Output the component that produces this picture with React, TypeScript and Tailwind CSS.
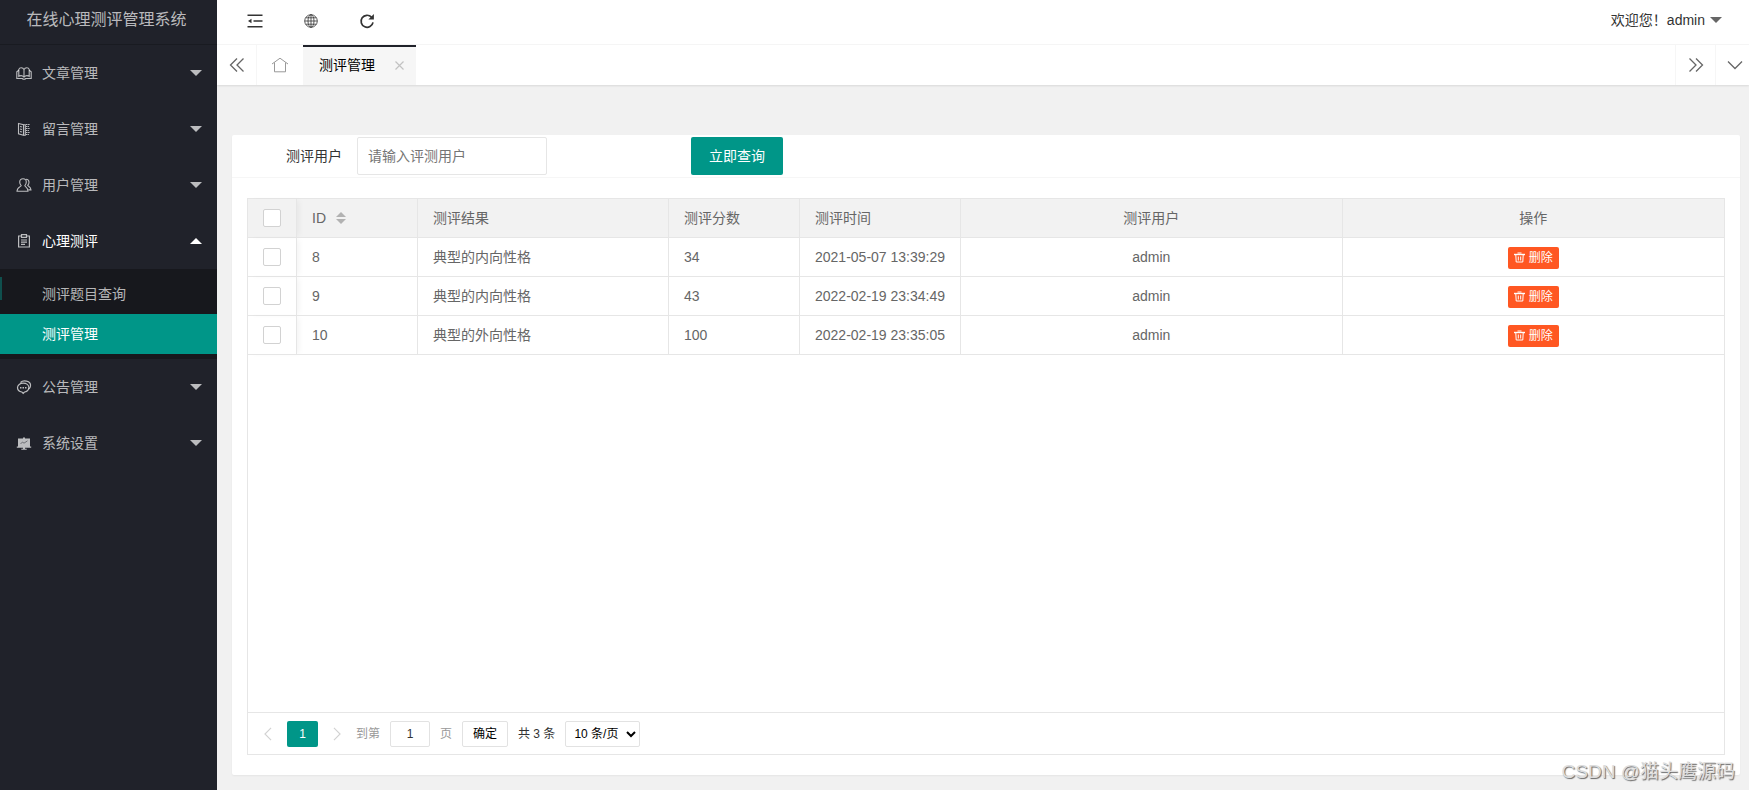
import { useState } from "react";

const FONT = "font-['Liberation_Sans','Noto_Sans_CJK_SC',sans-serif]";

interface IconProps {
    className?: string;
}

const BookIcon = () => (
    <svg width="16" height="16" viewBox="0 0 16 16" fill="none" stroke="currentColor" strokeWidth="1.1">
        <path d="M8 4.600C7 2.200 3.600 2.200 2.800 4.400v7c1.400-1 3.800-.8 5.200.6 1.400-1.400 3.800-1.600 5.200-.6v-7C12.400 2.200 9 2.200 8 4.600zM8 4.600v7.400" />
        <path d="M2.800 5.200L.8 6.800v6.700h5.400c1 .8 2.600.8 3.600 0h5.400V6.800l-2-1.600" />
    </svg>
);

const ReadIcon = () => (
    <svg width="16" height="16" viewBox="0 0 16 16" fill="none" stroke="currentColor" strokeWidth="1.1">
        <path d="M2.500 2.500l5 1.200v10.500l-5-1.400zM7.500 3.700h1.800v10.500H7.500" />
        <path d="M4 5.500l2 .5M4 8l2 .5M4 10.500l2 .5" />
        <path d="M10 3.500h4M10 5.500h3M10 7.500h4M10 9.500h3M10 11.500h4M10 13.500h3" strokeDasharray="1.500 .6" />
    </svg>
);

const UsersIcon = () => (
    <svg width="16" height="16" viewBox="0 0 16 16" fill="none" stroke="currentColor" strokeWidth="1.100">
        <path d="M7 1.700c2 0 3.300 1.400 3.300 3.400 0 1.500-.6 2.800-1.500 3.500 0 1 3.200 1.600 3.200 5.600H1c0-4 4.200-4.600 4.200-5.600-.9-.7-1.500-2-1.500-3.500 0-2 1.300-3.400 3.300-3.400z" />
        <path d="M10 2.300c2 0 3 1.300 3 3 0 1.300-.5 2.300-1.300 3 .2 1 3.300 1.500 3.300 4.600h-2.500" />
    </svg>
);

const FormIcon = () => (
    <svg width="16" height="16" viewBox="0 0 16 16" fill="none" stroke="currentColor" strokeWidth="1.200">
        <path d="M5 3H2.600v11h10.800V3H11" />
        <path d="M5.500 1.700h5v2.600h-5zM5 7h6M5 9.200h6M5 11.400h4" />
    </svg>
);

const ChatIcon = () => (
    <svg width="16" height="16" viewBox="0 0 16 16" fill="none" stroke="currentColor" strokeWidth="1.200">
        <path d="M7.200 4.200c3.200 0 5.700 1.900 5.700 4.400S10.400 13 8.500 13L7.200 14.300 5.900 13C3.500 12.700 1.500 11 1.500 8.600s2.500-4.400 5.700-4.400z" />
        <path d="M4.500 3.500C6 2 8.500 1.700 10.500 2.200c2.600.6 4.300 2.600 4 4.800-.1 1.300-.8 2.300-1.900 3" />
        <path d="M4 8.700h1.500M6.500 8.700H8M9 8.700h1.500" strokeWidth="1.600" />
    </svg>
);

const BoardIcon = () => (
    <svg width="16" height="16" viewBox="0 0 16 16" fill="currentColor">
        <path d="M7 2.500h2v1h5v8h1.200v1.200H9v1h1.700v1H5.300v-1H7v-1H.8v-1.200H2v-8h5z" />
        <path d="M4.500 9l2-2 1.500 1.200 3.500-2.400" fill="none" stroke="#20222a" strokeWidth=".5" />
    </svg>
);

const GlobeIcon = () => (
    <svg width="14" height="14" viewBox="0 0 14 14" fill="none" stroke="currentColor" strokeWidth=".8">
        <circle cx="7" cy="7" r="6.300" />
        <ellipse cx="7" cy="7" rx="3" ry="6.300" />
        <path d="M7 .7v12.600M.7 7h12.600M1.700 3.800h10.600M1.700 10.200h10.600" />
    </svg>
);

const OutdentIcon = () => (
    <svg width="16" height="14" viewBox="0 0 16 14" fill="currentColor">
        <path d="M.5.500h15v1.500H.5zM6.500 6.200h9v1.500h-9zM.5 12h15v1.500H.5zM4.500 4.700v4.600L1 7z" />
    </svg>
);

const RefreshIcon = () => (
    <svg width="16" height="16" viewBox="0 0 16 16">
        <path d="M12.500 4.200A6 6 0 1 0 14 9.300" fill="none" stroke="currentColor" strokeWidth="1.700" />
        <path d="M14.900 1v5.500H9.400z" fill="currentColor" />
    </svg>
);

const HomeIcon = () => (
    <svg width="18" height="16" viewBox="0 0 18 16" fill="none" stroke="currentColor">
        <path d="M1 7l8-5.800L17 7M3.500 5.500v9.300h11V5.500" />
    </svg>
);

const TrashIcon = () => (
    <svg width="11" height="11" viewBox="0 0 11 11" fill="none" stroke="currentColor">
        <path d="M0 2.500h11" strokeWidth="1.400" />
        <path d="M3.500 1h4M1.800 3l.4 7h6.600l.4-7M4.300 4.500v4M6.700 4.500v4" />
    </svg>
);

const DoubleChevron = ({ className = "" }: IconProps) => (
    <svg className={className} width="16" height="16" viewBox="0 0 16 16" fill="none" stroke="currentColor" strokeWidth="1.300">
        <path d="M8 1.500L1.500 8 8 14.500M14.500 1.500L8 8l6.500 6.500" />
    </svg>
);

const Chevron = ({ className = "" }: IconProps) => (
    <svg className={className} width="16" height="16" viewBox="0 0 16 16" fill="none" stroke="currentColor" strokeWidth="1.300">
        <path d="M1 4.500l7 7 7-7" />
    </svg>
);

const Caret = ({ className = "" }: IconProps) => (
    <svg className={className} width="12" height="6" viewBox="0 0 12 6" fill="currentColor">
        <path d="M0 0h12L6 6z" />
    </svg>
);

const menus = [
    { name: "文章管理", icon: <BookIcon /> },
    { name: "留言管理", icon: <ReadIcon /> },
    { name: "用户管理", icon: <UsersIcon /> },
    { name: "心理测评", icon: <FormIcon />, children: ["测评题目查询", "测评管理"] },
    { name: "公告管理", icon: <ChatIcon /> },
    { name: "系统设置", icon: <BoardIcon /> },
];

const rows = [
    { id: 8, result: "典型的内向性格", score: 34, time: "2021-05-07 13:39:29", user: "admin" },
    { id: 9, result: "典型的内向性格", score: 43, time: "2022-02-19 23:34:49", user: "admin" },
    { id: 10, result: "典型的外向性格", score: 100, time: "2022-02-19 23:35:05", user: "admin" },
];

const Sidebar = () => (
    <aside className="w-[217px] shrink-0 bg-[#20222a] text-sm text-white/70">
        <h1 className="h-[45px] border-b border-black/20 pr-7 pl-6 text-center text-base leading-10">在线心理测评管理系统</h1>
        <nav>
            <ul>
                {menus.map((menu) => (
                    <li key={menu.name}>
                        <button className={`flex h-14 w-full items-center px-4 ${menu.children ? "text-white" : ""}`}>
                            <span className="text-white/70">{menu.icon}</span>
                            <span className="ml-[10px] flex-1 text-left">{menu.name}</span>
                            <Caret className={menu.children ? "-mr-px rotate-180" : "-mr-px"} />
                        </button>
                        {menu.children && (
                            <ul className="relative bg-[#17181d] py-[5px]">
                                <span className="absolute top-2 left-0 h-[23px] w-[2px] bg-[#0f4f4d]" />
                                {menu.children.map((child) => (
                                    <li key={child}>
                                        <a
                                            href="#"
                                            className={`block h-10 pl-[42px] leading-10 ${child === "测评管理" ? "bg-[#009688] text-white" : ""}`}
                                        >
                                            {child}
                                        </a>
                                    </li>
                                ))}
                            </ul>
                        )}
                    </li>
                ))}
            </ul>
        </nav>
    </aside>
);

const Header = () => (
    <header className="flex h-[45px] items-start justify-between border-b border-[#f6f6f6] bg-white pr-[27px] text-[#333]">
        <div className="flex h-[42px] items-center">
            <button aria-label="收起菜单" className="flex w-[76px] justify-center"><OutdentIcon /></button>
            <button aria-label="网站" className="flex w-9 justify-center"><GlobeIcon /></button>
            <button aria-label="刷新" className="flex w-[76px] justify-center"><RefreshIcon /></button>
        </div>
        <button className="flex h-10 items-center gap-[5px] text-sm">
            {"欢迎您\uFF01admin"}
            <Caret className="text-[#666]" />
        </button>
    </header>
);

const TabBar = () => (
    <div className="flex h-10 bg-white text-[#666] shadow-[0_1px_2px_rgba(0,0,0,0.1)]">
        <button aria-label="向左" className="flex w-10 items-center justify-center border-r border-[#f6f6f6]"><DoubleChevron /></button>
        <button aria-label="主页" className="flex w-[46px] items-center justify-center text-[#999]"><HomeIcon /></button>
        <div className="flex w-[113px] items-center justify-between bg-[#f6f6f6] pr-3 pl-4 text-sm text-black shadow-[inset_0_2px_0_#20222a]">
            <span>测评管理</span>
            <button aria-label="关闭" className="text-[#c2c2c2]">
                <svg width="9" height="9" viewBox="0 0 9 9" stroke="currentColor" strokeWidth="1.200">
                    <path d="M.5.500l8 8M8.500.500l-8 8" />
                </svg>
            </button>
        </div>
        <div className="ml-auto flex">
            <button aria-label="向右" className="flex w-10 items-center justify-center border-l border-[#f6f6f6]"><DoubleChevron className="rotate-180" /></button>
            <button aria-label="更多" className="flex w-[34px] items-center justify-end border-l border-[#f6f6f6] pr-[6px]"><Chevron /></button>
        </div>
    </div>
);

const CheckBox = ({ label }: { label: string }) => (
    <input
        type="checkbox"
        aria-label={label}
        className="mx-auto block h-[18px] w-[18px] appearance-none rounded-[2px] border border-[#d2d2d2] bg-white checked:bg-[#009688]"
    />
);

const ResultTable = () => (
    <table className="w-full table-fixed border-separate border-spacing-0 text-left text-sm text-[#666]">
        <colgroup>
            <col className="w-[49px]" />
            <col className="w-[121px]" />
            <col className="w-[251px]" />
            <col className="w-[131px]" />
            <col className="w-[161px]" />
            <col />
            <col />
        </colgroup>
        <thead>
            <tr className="h-[39px] bg-[#f2f2f2] *:border-r *:border-b *:border-[#e6e6e6] *:px-[15px] *:py-0 *:font-normal *:last:border-r-0">
                <th className="shadow-[4px_0_6px_-2px_rgba(0,0,0,0.05)]"><CheckBox label="全选" /></th>
                <th>
                    <span className="flex items-center gap-[10px]">
                        ID
                        <button aria-label="排序" className="flex flex-col gap-[2px] text-[#b2b2b2]">
                            <svg width="10" height="5" viewBox="0 0 10 5" fill="currentColor"><path d="M0 5h10L5 0z" /></svg>
                            <svg width="10" height="5" viewBox="0 0 10 5" fill="currentColor"><path d="M0 0h10L5 5z" /></svg>
                        </button>
                    </span>
                </th>
                <th>测评结果</th>
                <th>测评分数</th>
                <th>测评时间</th>
                <th className="text-center">测评用户</th>
                <th className="text-center">操作</th>
            </tr>
        </thead>
        <tbody>
            {rows.map((row) => (
                <tr key={row.id} className="h-[39px] *:border-r *:border-b *:border-[#e6e6e6] *:px-[15px] *:py-0 *:last:border-r-0">
                    <td className="shadow-[4px_0_6px_-2px_rgba(0,0,0,0.05)]"><CheckBox label={`选择 ${row.id}`} /></td>
                    <td>{row.id}</td>
                    <td>{row.result}</td>
                    <td>{row.score}</td>
                    <td className="whitespace-nowrap">{row.time}</td>
                    <td className="text-center">{row.user}</td>
                    <td>
                        <button className="mx-auto mt-px flex h-[22px] w-[51px] items-center justify-center gap-1 rounded-[2px] bg-[#ff5722] text-xs text-white">
                            <TrashIcon />
                            删除
                        </button>
                    </td>
                </tr>
            ))}
        </tbody>
    </table>
);

const Pagination = () => {
    const [page, setPage] = useState("1");

    return (
        <div className="flex h-[42px] items-center border-t border-[#e6e6e6] pl-3 text-xs text-[#333]">
            <button aria-label="上一页" className="mr-[11px] flex w-4 justify-center text-[#d2d2d2]"><Chevron className="h-[14px] w-[14px] rotate-90" /></button>
            <button className="h-[26px] w-[31px] rounded-[2px] bg-[#009688] text-white">1</button>
            <button aria-label="下一页" className="ml-[11px] flex w-4 justify-center text-[#d2d2d2]"><Chevron className="h-[14px] w-[14px] -rotate-90" /></button>
            <label className="ml-[11px] flex items-center gap-[10px] text-[#999]">
                到第
                <input
                    value={page}
                    onChange={(e) => setPage(e.target.value)}
                    className="h-[26px] w-10 rounded-[2px] border border-[#e2e2e2] bg-white text-center text-[#333]"
                />
                页
            </label>
            <button className="ml-[10px] h-[26px] w-[46px] rounded-[2px] border border-[#e2e2e2] text-black">确定</button>
            <span className="ml-[10px]">共 3 条</span>
            <select aria-label="每页条数" className="ml-[10px] h-[26px] w-[75px] rounded-[2px] border border-[#e2e2e2] bg-white pl-1 text-black">
                <option>10 条/页</option>
                <option>20 条/页</option>
                <option>30 条/页</option>
            </select>
        </div>
    );
};

export default function App() {
    return (
        <div className={`flex min-h-screen bg-[#f1f1f1] ${FONT}`}>
            <Sidebar />
            <div className="relative flex min-w-0 flex-1 flex-col">
                <Header />
                <TabBar />
                <main className="flex flex-1 flex-col pt-[50px] pr-[9px] pb-[15px] pl-[15px]">
                    <section className="flex flex-1 flex-col rounded-[2px] bg-white shadow-[0_1px_2px_rgba(0,0,0,0.05)]">
                        <form className="flex h-[43px] items-center border-b border-[#f6f6f6] text-sm text-[#333]" onSubmit={(e) => e.preventDefault()}>
                            <label htmlFor="user" className="w-[110px] text-right">测评用户</label>
                            <input
                                id="user"
                                placeholder="请输入评测用户"
                                className="ml-[15px] h-[38px] w-[190px] rounded-[2px] border border-[#e6e6e6] pl-[10px] placeholder:text-[#757575]"
                            />
                            <button className="ml-36 h-[38px] w-[92px] rounded-[2px] bg-[#009688] text-white">立即查询</button>
                        </form>
                        <div className="flex flex-1 flex-col px-[15px] py-5">
                            <div className="flex flex-1 flex-col border border-[#e6e6e6]">
                                <div className="flex-1"><ResultTable /></div>
                                <Pagination />
                            </div>
                        </div>
                    </section>
                </main>
                <p className="pointer-events-none absolute right-[14px] bottom-1 text-[19px] leading-7 text-[#ddd] [text-shadow:1px_1px_1px_#666]">
                    CSDN @猫头鹰源码
                </p>
            </div>
        </div>
    );
}
